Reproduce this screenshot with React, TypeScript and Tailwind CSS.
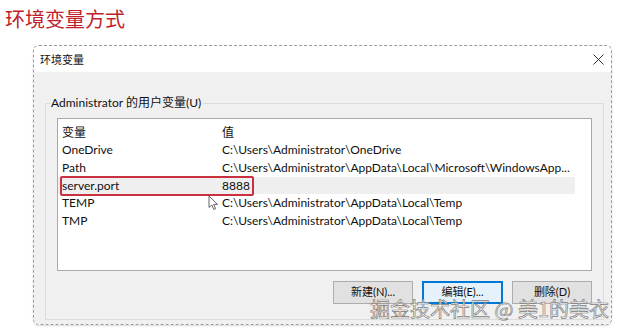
import React from "react";

const rows = [
  { name: "OneDrive", value: "C:\\Users\\Administrator\\OneDrive" },
  { name: "Path", value: "C:\\Users\\Administrator\\AppData\\Local\\Microsoft\\WindowsApp..." },
  { name: "server.port", value: "8888", selected: true },
  { name: "TEMP", value: "C:\\Users\\Administrator\\AppData\\Local\\Temp" },
  { name: "TMP", value: "C:\\Users\\Administrator\\AppData\\Local\\Temp" },
];

const uiFont = '"Lato", "Noto Sans CJK SC", sans-serif';

export default function App() {
  return (
    <div
      className="relative w-[620px] h-[334px] bg-white overflow-hidden flex flex-col"
      style={{ fontFamily: '"Noto Sans CJK SC", "Noto Sans", sans-serif' }}
    >
      <h1 className="h-[45px] pl-[5px] pt-[6px] text-[20px] leading-[26px] text-[#bf1f2d]">
        环境变量方式
      </h1>

      <div className="ml-[33px] w-[579px] h-[280px] flex flex-col rounded-[6px] border border-dashed border-[#9b9b9b] overflow-hidden shadow-[0_1px_2px_rgba(0,0,0,0.15)]">
        <div className="h-[26px] bg-white flex items-center justify-between pl-[6px] pr-[7px]">
          <span className="text-[11px] leading-none text-[#111]">环境变量</span>
          <svg width="11" height="11" viewBox="0 0 11 11" className="mt-[1px]">
            <path d="M0.5 0.5 L10.5 10.5 M10.5 0.5 L0.5 10.5" stroke="#333" strokeWidth="1" fill="none" />
          </svg>
        </div>

        <div className="flex-1 bg-[#f0f0f0] pl-[11px] pr-[7px] pt-[22px] pb-[4px] flex flex-col">
          <fieldset
            className="flex-1 border border-[#dcdcdc] pl-[5px] pr-[11px] flex flex-col"
            style={{ fontFamily: uiFont }}
          >
            <legend className="text-[12px] leading-[18px] text-[#111] px-0 pr-[2px]">
              Administrator 的用户变量(U)
            </legend>

            <div className="mt-[6px] ml-[6px] w-[535px] h-[153px] bg-white border border-[#a9a9a9] pt-[5px] text-[12px] text-[#111] overflow-hidden">
              <div className="flex h-[17.6px] items-center w-[517px]">
                <div className="w-[164px] shrink-0 pl-[4px]">变量</div>
                <div>值</div>
              </div>
              {rows.map((r) => (
                <div
                  key={r.name}
                  className={
                    "relative flex h-[17.6px] items-center w-[517px] whitespace-nowrap " +
                    (r.selected ? "bg-[#efefef]" : "")
                  }
                >
                  <div className="w-[164px] shrink-0 pl-[4px]">{r.name}</div>
                  <div className="shrink-0">{r.value}</div>
                  {r.selected && (
                    <div className="absolute left-[2px] top-[-1px] w-[194px] h-[20px] border-2 border-[#c9313f] rounded-[2px]" />
                  )}
                </div>
              ))}
            </div>

            <div className="mt-[10px] flex justify-end gap-[9px]">
              <button className="w-[80px] h-[23px] bg-[#e1e1e1] border border-[#adadad] text-[11px] text-[#111]">
                新建(N)...
              </button>
              <button className="w-[81px] h-[23px] bg-[#e5f1fb] border-2 border-[#0078d7] text-[11px] text-[#111]">
                编辑(E)...
              </button>
              <button className="w-[80px] h-[23px] bg-[#e1e1e1] border border-[#adadad] text-[11px] text-[#111]">
                删除(D)
              </button>
            </div>
          </fieldset>
        </div>
      </div>

      <svg width="12" height="16" viewBox="0 0 12 16" className="absolute left-[208px] top-[195px]">
        <path d="M1 1 L1 12.5 L3.8 10 L5.8 14.5 L7.6 13.7 L5.7 9.4 L9.5 9.4 Z" fill="#fff" stroke="#555" strokeWidth="0.9" strokeLinejoin="round" />
      </svg>

      <div className="absolute left-[370px] top-[296px] text-[20px] leading-[26px] whitespace-nowrap text-[rgba(255,255,255,0.85)] [-webkit-text-stroke:0.7px_#808080]">
        掘金技术社区 @ 美1的美衣
      </div>
    </div>
  );
}
